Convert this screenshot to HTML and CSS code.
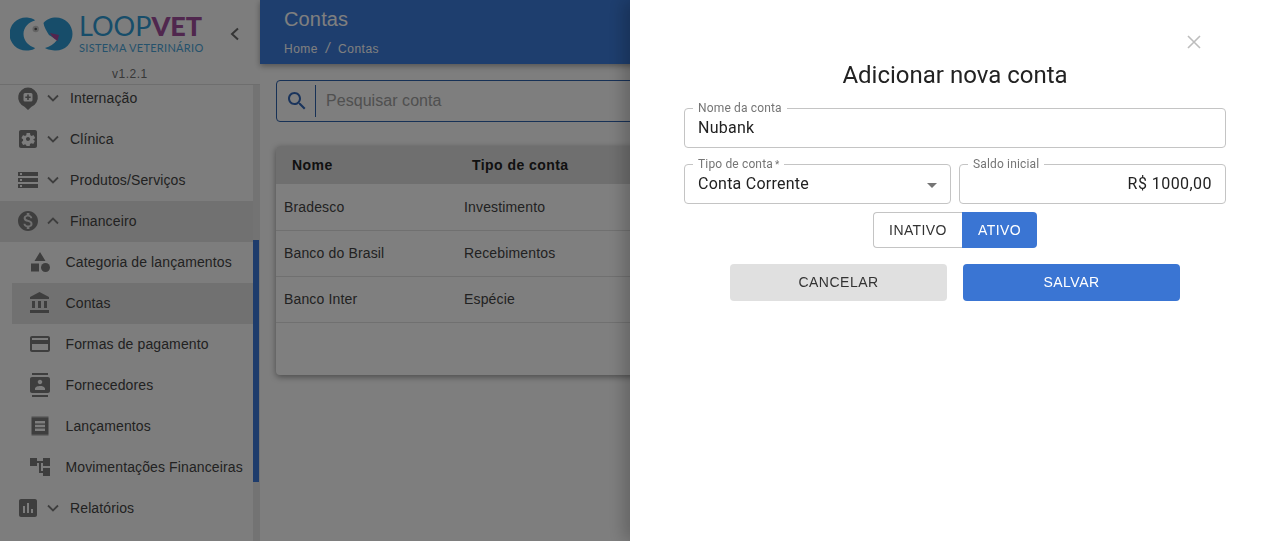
FILE: index.html
```html
<!DOCTYPE html>
<html lang="pt-BR">
<head>
    <meta charset="UTF-8">
    <meta name="viewport" content="width=device-width, initial-scale=1.0">
    <title>Contas</title>
    <link rel="stylesheet" href="styles.css">
</head>
<body>

<div class="app">
    <aside class="sidebar">
        <div class="brand">
            <div class="brand-row">
                <svg class="logo-mark" viewBox="0 0 64 36">
                    <path class="teal" d="M16 1.500A16.500 16.500 0 1 0 16 34.500C19 34.500 24 34 25 32C19 30 13.500 25 13.500 18C13.500 11 19 6 25 4.500C24 2.500 19 1.500 16 1.500Z"/>
                    <path class="teal" d="M46 1.500A16.500 16.500 0 1 1 46 34.500C42 34.500 37 33.500 35 32C40 30.500 44 28 47 24L39 19C36.500 15 34 11 33.500 7C36 3.500 41 1.500 46 1.500Z"/>
                    <path class="plum" d="M40 17L49 19L47.500 25C44 23 41.500 20 40 17Z"/>
                    <circle class="eye" cx="25.700" cy="13" r="3.200"/>
                    <circle class="eye-dot" cx="25.700" cy="13" r="1.300"/>
                </svg>
                <div class="logo-text">
                    <div class="logo-name">LOOP<b>VET</b></div>
                    <div class="logo-sub">SISTEMA VETERINÁRIO</div>
                </div>
                <svg class="collapse" viewBox="0 0 12 16"><polyline points="9,2.500 3,8 9,13.500"/></svg>
            </div>
            <div class="version">v1.2.1</div>
        </div>

        <nav class="nav">
            <div class="nav-list">
                <a class="nav-item">
                    <svg class="icon" viewBox="0 0 24 24"><path fill-rule="evenodd" d="M12 1.500a10 10 0 0 1 3.500 19.300L12 24l-3.500-3.200A10 10 0 0 1 12 1.500ZM9 7a1.500 1.500 0 0 0-1.500 1.500v5.500a1.500 1.500 0 0 0 1.500 1.500h6a1.500 1.500 0 0 0 1.500-1.500V8.500A1.500 1.500 0 0 0 15 7ZM11.200 8.500v2H9.300v1.600h1.900v2h1.600v-2h1.900v-1.600h-1.900v-2Z"/></svg>
                    <svg class="chevron" viewBox="0 0 12 8"><polyline points="1,1.500 6,6.500 11,1.500"/></svg>
                    <span>Internação</span>
                </a>
                <a class="nav-item">
                    <svg class="icon" viewBox="0 0 24 24"><path fill-rule="evenodd" d="M12 10c-1.100 0-2 .9-2 2s.9 2 2 2 2-.9 2-2-.9-2-2-2zm7-7H5c-1.110 0-2 .9-2 2v14c0 1.100.89 2 2 2h14c1.110 0 2-.9 2-2V5c0-1.100-.89-2-2-2zm-1.750 9c0 .23-.02.46-.05.68l1.480 1.160c.13.11.17.3.08.45l-1.400 2.420c-.09.15-.27.21-.43.15l-1.740-.7c-.36.28-.76.51-1.180.69l-.26 1.850c-.03.17-.18.3-.35.3h-2.800c-.17 0-.32-.13-.35-.3L10.300 17.900c-.43-.18-.82-.41-1.180-.69l-1.740.7c-.16.06-.34 0-.43-.15l-1.400-2.420c-.09-.15-.05-.34.08-.45l1.480-1.160c-.03-.22-.05-.45-.05-.68 0-.23.02-.46.05-.68l-1.480-1.160c-.13-.11-.17-.3-.08-.45l1.400-2.420c.09-.15.27-.21.43-.15l1.740.7c.36-.28.76-.51 1.180-.69l.26-1.850c.03-.17.18-.3.35-.3h2.800c.17 0 .32.13.35.3l.26 1.850c.43.18.82.41 1.180.69l1.740-.7c.16-.06.34 0 .43.15l1.400 2.420c.09.15.05.34-.08.45l-1.480 1.160c.03.22.05.45.05.68z"/></svg>
                    <svg class="chevron" viewBox="0 0 12 8"><polyline points="1,1.500 6,6.500 11,1.500"/></svg>
                    <span>Clínica</span>
                </a>
                <a class="nav-item">
                    <svg class="icon" viewBox="0 0 24 24"><path d="M2 20h20v-4H2v4zm2-3h2v2H4v-2zM2 4v4h20V4H2zm4 3H4V5h2v2zm-4 7h20v-4H2v4zm2-3h2v2H4v-2z"/></svg>
                    <svg class="chevron" viewBox="0 0 12 8"><polyline points="1,1.500 6,6.500 11,1.500"/></svg>
                    <span>Produtos/Serviços</span>
                </a>
                <a class="nav-item open">
                    <svg class="icon" viewBox="0 0 24 24"><path d="M12 2C6.480 2 2 6.480 2 12s4.480 10 10 10 10-4.480 10-10S17.520 2 12 2zm1.410 16.090V20h-2.670v-1.930c-1.710-.36-3.160-1.460-3.270-3.400h1.960c.1 1.050.82 1.870 2.650 1.870 1.960 0 2.400-.98 2.400-1.590 0-.83-.44-1.610-2.670-2.140-2.480-.6-4.180-1.620-4.180-3.670 0-1.720 1.390-2.840 3.110-3.210V4h2.670v1.950c1.860.45 2.790 1.860 2.850 3.390H14.300c-.05-1.110-.64-1.870-2.220-1.870-1.500 0-2.400.68-2.400 1.640 0 .84.65 1.390 2.670 1.910s4.180 1.390 4.180 3.910c-.01 1.830-1.380 2.830-3.120 3.160z"/></svg>
                    <svg class="chevron" viewBox="0 0 12 8"><polyline points="1,6.500 6,1.500 11,6.500"/></svg>
                    <span>Financeiro</span>
                </a>
                <a class="nav-sub">
                    <svg class="icon" viewBox="0 0 24 24"><path d="M12 2l-5.500 9h11zM3 13.500h8v8H3z"/><circle cx="17.500" cy="17.500" r="4.500"/></svg>
                    <span>Categoria de lançamentos</span>
                </a>
                <a class="nav-sub active">
                    <svg class="icon" viewBox="0 0 24 24"><path d="M4 10v7h3v-7H4zm6 0v7h3v-7h-3zM2 22h19v-3H2v3zm14-12v7h3v-7h-3zm-4.500-9L2 6v2h19V6l-9.500-5z"/></svg>
                    <span>Contas</span>
                </a>
                <a class="nav-sub">
                    <svg class="icon" viewBox="0 0 24 24"><path d="M20 4H4c-1.110 0-1.990.89-1.990 2L2 18c0 1.110.89 2 2 2h16c1.110 0 2-.89 2-2V6c0-1.110-.89-2-2-2zm0 14H4v-6h16v6zm0-10H4V6h16v2z"/></svg>
                    <span>Formas de pagamento</span>
                </a>
                <a class="nav-sub">
                    <svg class="icon" viewBox="0 0 24 24"><path d="M20 0H4v2h16V0zM4 24h16v-2H4v2zM20 4H4c-1.100 0-2 .9-2 2v12c0 1.100.9 2 2 2h16c1.100 0 2-.9 2-2V6c0-1.100-.9-2-2-2zm-8 2.750c1.240 0 2.250 1.010 2.250 2.250s-1.010 2.250-2.250 2.250S9.750 10.240 9.750 9 10.760 6.750 12 6.750zM17 17H7v-1.500c0-1.670 3.330-2.500 5-2.500s5 .83 5 2.500V17z"/></svg>
                    <span>Fornecedores</span>
                </a>
                <a class="nav-sub">
                    <svg class="icon" viewBox="0 0 24 24">
                        <path fill-rule="evenodd" d="M3.500 2.500h17v19h-17zM7 7v2.500h10V7zM7 10.800v2.500h10v-2.500zM7 14.600v2.500h10v-2.500z"/>
                        <path class="notch" d="M3.500 3h17M3.500 21h17"/>
                    </svg>
                    <span>Lançamentos</span>
                </a>
                <a class="nav-sub">
                    <svg class="icon" viewBox="0 0 24 24"><path d="M22 11V3h-7v3H9V3H2v8h7V8h2v10h4v3h7v-8h-7v3h-2V8h2v3z"/></svg>
                    <span>Movimentações Financeiras</span>
                </a>
                <a class="nav-item">
                    <svg class="icon" viewBox="0 0 24 24"><path d="M19 3H5c-1.100 0-2 .9-2 2v14c0 1.100.9 2 2 2h14c1.100 0 2-.9 2-2V5c0-1.100-.9-2-2-2zM9 17H7v-7h2v7zm4 0h-2V7h2v10zm4 0h-2v-4h2v4z"/></svg>
                    <svg class="chevron" viewBox="0 0 12 8"><polyline points="1,1.500 6,6.500 11,1.500"/></svg>
                    <span>Relatórios</span>
                </a>
            </div>
            <div class="scroll-thumb"></div>
        </nav>
    </aside>

    <main class="main">
        <header class="topbar">
            <h1>Contas</h1>
            <div class="crumbs">Home <i>/</i> Contas</div>
        </header>
        <div class="content">
            <div class="search">
                <svg viewBox="0 0 24 24"><path d="M15.500 14h-.79l-.28-.27C15.410 12.590 16 11.110 16 9.500 16 5.910 13.090 3 9.500 3S3 5.910 3 9.500 5.910 16 9.500 16c1.610 0 3.090-.59 4.230-1.570l.27.28v.79l5 4.990L20.490 19l-4.990-5zm-6 0C7.010 14 5 11.990 5 9.500S7.010 5 9.500 5 14 7.010 14 9.500 11.990 14 9.500 14z"/></svg>
                <span>Pesquisar conta</span>
            </div>
            <div class="card">
                <table>
                    <thead>
                        <tr><th>Nome</th><th>Tipo de conta</th><th></th></tr>
                    </thead>
                    <tbody>
                        <tr><td>Bradesco</td><td>Investimento</td><td></td></tr>
                        <tr><td>Banco do Brasil</td><td>Recebimentos</td><td></td></tr>
                        <tr><td>Banco Inter</td><td>Espécie</td><td></td></tr>
                    </tbody>
                </table>
                <div class="card-foot"></div>
            </div>
        </div>
    </main>
</div>

<div class="backdrop"></div>

<section class="drawer">
    <div class="drawer-top">
        <svg class="close" viewBox="0 0 14 14"><path d="M1 1l12 12M13 1L1 13"/></svg>
    </div>
    <h2>Adicionar nova conta</h2>
    <div class="field">
        <label>Nome da conta</label>
        <span>Nubank</span>
    </div>
    <div class="field-row">
        <div class="field">
            <label>Tipo de conta<em>*</em></label>
            <span>Conta Corrente</span>
            <i class="caret"></i>
        </div>
        <div class="field money">
            <label>Saldo inicial</label>
            <span>R$ 1000,00</span>
        </div>
    </div>
    <div class="toggle">
        <button class="off">INATIVO</button>
        <button class="on">ATIVO</button>
    </div>
    <div class="actions">
        <button class="btn btn-cancel">CANCELAR</button>
        <button class="btn btn-save">SALVAR</button>
    </div>
</section>

</body>
</html>
```

FILE: styles.css
```css
* {
    box-sizing: border-box;
}
html, body {
    height: 100%;
}
body {
    margin: 0;
    overflow: hidden;
    background: #fcfcfc;
    color: #333;
    font-family: "Liberation Sans", Arial, sans-serif;
}

.app {
    display: flex;
    height: 541px;
}

/* sidebar */
.sidebar {
    width: 260px;
    flex-shrink: 0;
    display: flex;
    flex-direction: column;
    background: #fbfbfb;
}
.brand {
    height: 85px;
    flex-shrink: 0;
    padding: 13px 0 0 10px;
    border-bottom: 1px solid #dcdcdc;
}
.brand-row {
    display: flex;
    align-items: center;
}
.logo-mark {
    width: 64px;
    height: 36px;
    flex-shrink: 0;
}
.teal {
    fill: #2f9bd4;
}
.plum {
    fill: #a8489a;
}
.eye {
    fill: #c9c9c9;
}
.eye-dot {
    fill: #555;
}
.logo-text {
    margin-left: 5px;
    width: 126px;
}
.logo-name {
    font-family: Lato, sans-serif;
    font-size: 27px;
    line-height: 25px;
    font-weight: 400;
    white-space: nowrap;
    color: #2f9bd4;
}
.logo-name b {
    font-weight: 900;
    color: #a04f9c;
}
.logo-sub {
    margin-top: 2px;
    font-family: Lato, sans-serif;
    font-size: 11px;
    line-height: 15px;
    letter-spacing: .3px;
    white-space: nowrap;
    color: #4aa4d8;
}
.collapse {
    width: 12px;
    height: 16px;
    margin-left: 24px;
    fill: none;
    stroke: #6a6a6a;
    stroke-width: 2;
}
.version {
    margin-top: 12px;
    padding-left: 102px;
    font-size: 12px;
    line-height: 14px;
    letter-spacing: .5px;
    color: #707070;
}

.nav {
    flex: 1;
    position: relative;
    overflow: hidden;
    background: #e6e6e6;
}
.nav-list {
    margin: -7px 7px 0 0;
    min-height: 480px;
    background: #fbfbfb;
}
.nav-item, .nav-sub {
    display: flex;
    align-items: center;
    height: 41px;
    padding-bottom: 1px;
    font-size: 14px;
    letter-spacing: .12px;
    color: #444;
}
.icon {
    width: 24px;
    height: 24px;
    flex-shrink: 0;
    fill: #7c7c7c;
}
.notch {
    fill: none;
    stroke: #fbfbfb;
    stroke-width: 1;
    stroke-dasharray: 1 1;
}
.nav-item {
    padding-left: 16px;
}
.nav-item.open {
    background: #e3e3e3;
}
.chevron {
    width: 12px;
    height: 8px;
    margin: 0 11px 0 7px;
    fill: none;
    stroke: #7c7c7c;
    stroke-width: 1.800;
}
.nav-sub {
    margin-left: 12px;
    padding-left: 16px;
}
.nav-sub span {
    margin-left: 13.500px;
    white-space: nowrap;
}
.nav-sub.active {
    background: #e3e3e3;
}
.scroll-thumb {
    position: absolute;
    top: 155px;
    right: 1px;
    width: 6px;
    height: 242px;
    background: #3c78d8;
}

/* main area */
.main {
    flex: 1;
    min-width: 0;
}
.topbar {
    height: 64px;
    padding: 8px 24px 0;
    background: #3c7cdc;
    color: #fff;
    box-shadow: 0 2px 6px rgba(0, 0, 0, .35);
    position: relative;
}
.topbar h1 {
    margin: 0;
    font-size: 20px;
    line-height: 22px;
    font-weight: 400;
    letter-spacing: .15px;
}
.crumbs {
    margin-top: 11px;
    font-size: 12px;
    line-height: 14px;
    letter-spacing: .5px;
}
.crumbs i {
    margin: 0 4px;
    font-size: 14px;
}
.content {
    padding: 16px;
}
.search {
    display: flex;
    align-items: center;
    height: 42px;
    padding: 0 8px;
    border: 1px solid #2f62ad;
    border-radius: 4px;
}
.search svg {
    width: 24px;
    height: 24px;
    flex-shrink: 0;
    fill: #3468b8;
}
.search span {
    flex: 1;
    margin-left: 6px;
    padding-left: 10px;
    border-left: 1px solid #2f62ad;
    line-height: 32px;
    font-size: 16px;
    letter-spacing: .05px;
    color: #a0a0a0;
}
.card {
    margin-top: 24px;
    background: #fff;
    border-radius: 4px;
    overflow: hidden;
    box-shadow: 0 2px 6px rgba(0, 0, 0, .4);
}
table {
    width: 100%;
    border-collapse: collapse;
    table-layout: fixed;
}
th {
    height: 38px;
    padding: 0 0 0 16px;
    text-align: left;
    font-size: 14px;
    letter-spacing: .45px;
    color: #222;
    background: #dedede;
}
th:first-child, td:first-child {
    width: 180px;
}
td {
    height: 46px;
    padding: 0 0 0 8px;
    font-size: 14px;
    letter-spacing: .15px;
    color: #444;
    border-bottom: 1px solid #e0e0e0;
}
th:nth-child(2), td:nth-child(2) {
    width: 300px;
}
.card-foot {
    height: 52px;
}

/* modal layer */
.backdrop {
    position: fixed;
    inset: 0;
    background: rgba(0, 0, 0, .5);
}
.drawer {
    position: fixed;
    top: 0;
    right: 0;
    bottom: 0;
    width: 650px;
    padding: 0 54px;
    background: #fff;
    box-shadow: -6px 0 16px rgba(0, 0, 0, .22);
    font-family: Roboto, sans-serif;
}
.drawer-top {
    height: 60px;
    padding: 35px 25px 0 0;
    display: flex;
    justify-content: flex-end;
}
.close {
    width: 14px;
    height: 14px;
    fill: none;
    stroke: #bdbdbd;
    stroke-width: 1.600;
}
.drawer h2 {
    margin: 0;
    height: 48px;
    line-height: 30px;
    text-align: center;
    font-size: 24px;
    font-weight: 400;
    color: #222;
}
.field {
    position: relative;
    flex: 1;
    display: flex;
    align-items: center;
    height: 40px;
    padding: 0 13px 2px;
    border: 1px solid #c4c4c4;
    border-radius: 4px;
    font-size: 16px;
    letter-spacing: .25px;
    color: #222;
}
.field label {
    position: absolute;
    top: -8px;
    left: 8px;
    padding: 0 5px;
    background: #fff;
    font-size: 12px;
    line-height: 14px;
    letter-spacing: .15px;
    color: #757575;
}
.field em {
    font-style: normal;
    font-size: 10px;
    margin-left: 2px;
}
.field-row {
    display: flex;
    gap: 8px;
    margin-top: 16px;
}
.money {
    justify-content: flex-end;
    letter-spacing: .45px;
}
.caret {
    position: absolute;
    right: 13px;
    top: 18px;
    border-left: 5px solid transparent;
    border-right: 5px solid transparent;
    border-top: 5px solid #757575;
}
.toggle {
    display: flex;
    justify-content: center;
    margin-top: 8px;
}
.toggle button {
    height: 36px;
    font-family: "Liberation Sans", Arial, sans-serif;
    font-size: 14px;
    letter-spacing: .4px;
    border-radius: 4px;
}
.off {
    width: 89px;
    background: #fff;
    color: #333;
    border: 1px solid #c4c4c4;
    border-right: 0;
    border-top-right-radius: 0 !important;
    border-bottom-right-radius: 0 !important;
}
.on {
    width: 75px;
    background: #3a75d3;
    color: #fff;
    border: 0;
    border-top-left-radius: 0 !important;
    border-bottom-left-radius: 0 !important;
}
.actions {
    display: flex;
    justify-content: center;
    gap: 16px;
    margin-top: 16px;
}
.btn {
    width: 217px;
    height: 37px;
    padding-bottom: 3px;
    border: 0;
    border-radius: 4px;
    font-family: "Liberation Sans", Arial, sans-serif;
    font-size: 14px;
    letter-spacing: .5px;
}
.btn-cancel {
    background: #e0e0e0;
    color: #333;
}
.btn-save {
    background: #3a75d3;
    color: #fff;
}
```
